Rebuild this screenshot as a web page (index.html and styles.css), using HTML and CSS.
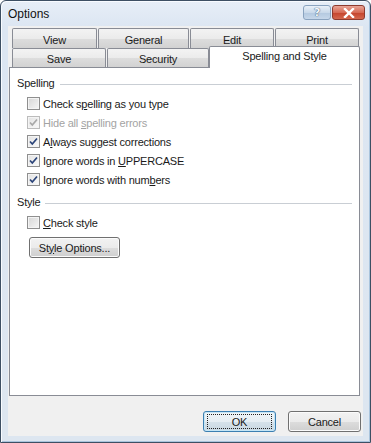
FILE: index.html
```html
<!DOCTYPE html>
<html>
<head>
<meta charset="utf-8">
<link rel="stylesheet" href="styles.css">
</head>
<body>
<div class="window">
  <div class="titlebar">
    <span class="title">Options</span>
    <div class="caption-btns">
      <div class="cbtn help"><span class="qmark">?</span></div>
      <div class="cbtn close">
        <svg width="14" height="10" viewBox="0 0 14 10"><path d="M3 1 L11 9 M11 1 L3 9" stroke="#ffffff" stroke-width="2.4" stroke-linecap="square" fill="none"/></svg>
      </div>
    </div>
  </div>
  <div class="client">
    <div class="tabs">
      <div class="tabrow row1">
        <div class="tab t-view">View</div>
        <div class="tab t-general">General</div>
        <div class="tab t-edit">Edit</div>
        <div class="tab t-print">Print</div>
      </div>
      <div class="tabrow row2">
        <div class="tab t-save">Save</div>
        <div class="tab t-security">Security</div>
        <div class="tab selected t-spelling">Spelling and Style</div>
      </div>
    </div>
    <div class="panel">
      <div class="group-head first"><span>Spelling</span><i class="rule"></i></div>
      <div class="opts">
        <div class="opt"><span class="cb"></span><span>Check s<u>p</u>elling as you type</span></div>
        <div class="opt disabled"><span class="cb checked"><svg width="11" height="11" viewBox="0 0 11 11"><path d="M2 5.5 L4.3 8 L9 2.5" stroke="#a8a8a8" stroke-width="1.7" fill="none"/></svg></span><span>Hide all <u>s</u>pelling errors</span></div>
        <div class="opt"><span class="cb checked"><svg width="11" height="11" viewBox="0 0 11 11"><path d="M2 5.5 L4.3 8 L9 2.5" stroke="#2b4479" stroke-width="1.7" fill="none"/></svg></span><span>A<u>l</u>ways suggest corrections</span></div>
        <div class="opt"><span class="cb checked"><svg width="11" height="11" viewBox="0 0 11 11"><path d="M2 5.5 L4.3 8 L9 2.5" stroke="#2b4479" stroke-width="1.7" fill="none"/></svg></span><span>Ignore words in <u>U</u>PPERCASE</span></div>
        <div class="opt"><span class="cb checked"><svg width="11" height="11" viewBox="0 0 11 11"><path d="M2 5.5 L4.3 8 L9 2.5" stroke="#2b4479" stroke-width="1.7" fill="none"/></svg></span><span>Ignore words with num<u>b</u>ers</span></div>
      </div>
      <div class="group-head second"><span>Style</span><i class="rule"></i></div>
      <div class="opts">
        <div class="opt"><span class="cb"></span><span><u>C</u>heck style</span></div>
      </div>
      <div class="btn style-btn">St<u>y</u>le Options...</div>
    </div>
    <div class="footer">
      <div class="btn default"><span class="focus">OK</span></div>
      <div class="btn">Cancel</div>
    </div>
  </div>
</div>
</body>
</html>
```

FILE: styles.css
```css
html, body {
  margin: 0;
  padding: 0;
}
body {
  width: 371px;
  height: 443px;
  font-family: "Liberation Sans", Arial, sans-serif;
  font-size: 11px;
  letter-spacing: -0.2px;
  color: #1a1a1a;
  overflow: hidden;
}
u { text-decoration: underline; text-underline-offset: 1px; }

.window {
  width: 371px;
  height: 443px;
  box-sizing: border-box;
  border: 1px solid #3d4f63;
  border-radius: 6px 6px 0 0;
  background: linear-gradient(#e7eef7, #dce6f2 26px, #dde6f0);
  display: flex;
  flex-direction: column;
  box-shadow: inset 1px 1px 0 #f8fbff, inset -1px -1px 0 #a9c4dd;
}

.titlebar {
  height: 25px;
  display: flex;
  align-items: center;
  justify-content: space-between;
  padding: 0 5px 0 7px;
}
.title {
  font-size: 12px;
  letter-spacing: 0;
  color: #111;
}
.caption-btns {
  display: flex;
  gap: 1px;
  align-self: flex-start;
  margin-top: 4px;
}
.cbtn {
  height: 15px;
  border-radius: 3px;
  display: flex;
  align-items: center;
  justify-content: center;
  box-sizing: border-box;
}
.help {
  width: 28px;
  border: 1px solid #8aa3bf;
  background: linear-gradient(#e9f0f8, #c9d9ea 50%, #b3c8df 51%, #c6d7ea);
}
.qmark {
  font-family: "DejaVu Sans", sans-serif;
  font-weight: bold;
  font-size: 11px;
  color: #f4f8fc;
  text-shadow: 0 0 1px #3e5a7a, 0 0 1px #3e5a7a;
  line-height: 13px;
}
.close {
  width: 33px;
  border: 1px solid #8d3a2e;
  background: linear-gradient(#e9a597, #d66a55 50%, #c4432c 51%, #d4674e);
}

.client {
  flex: 1;
  margin: 0 7px 6px 7px;
  background: #f0f0f0;
  display: flex;
  flex-direction: column;
}

.tabs {
  padding: 2px 0 0 4px;
}
.tabrow {
  display: flex;
}
.tab {
  box-sizing: border-box;
  border: 1px solid #898c95;
  border-bottom: none;
  border-radius: 2px 2px 0 0;
  background: linear-gradient(#f3f3f3, #ebebeb 50%, #dddddd 51%, #d2d2d2);
  text-align: center;
  margin-right: 1px;
}
.row1 .tab {
  height: 20px;
  line-height: 20px;
  padding-top: 1px;
}
.row2 .tab {
  height: 19px;
  line-height: 19px;
  padding-top: 1px;
}
.t-view { width: 85px; }
.t-general { width: 91px; }
.t-edit { width: 84px; }
.t-print { width: 84px; margin-right: 0; }
.t-save { width: 94px; }
.t-security { width: 102px; margin-right: 0; }
.row2 .tab.selected {
  width: 151px;
  height: 22px;
  line-height: 18px;
  padding-top: 0;
  margin-top: -2px;
  margin-bottom: -1px;
  margin-right: 0;
  background: #ffffff;
  position: relative;
  z-index: 1;
}

.panel {
  margin-left: 1px;
  width: 351px;
  height: 329px;
  box-sizing: border-box;
  border: 1px solid #898c95;
  background: #ffffff;
  padding: 0 7px 0 7px;
  display: flex;
  flex-direction: column;
  align-items: stretch;
}
.group-head {
  height: 13px;
  line-height: 13px;
  display: flex;
  align-items: center;
  gap: 5px;
}
.group-head.first { margin-top: 9px; }
.group-head.second { margin-top: 7px; }
.rule {
  flex: 1;
  height: 1px;
  background: #c9ced4;
  margin-top: 1px;
}
.opts {
  margin-top: 4px;
  padding-left: 10px;
}
.opt {
  height: 19px;
  display: flex;
  align-items: center;
  gap: 3px;
}
.opt.disabled { color: #a3a3a3; }
.cb {
  width: 13px;
  height: 13px;
  box-sizing: border-box;
  border: 1px solid #8f8f8f;
  background: linear-gradient(135deg, #d6d6d6, #f6f6f6);
  box-shadow: inset 0 0 0 1px #f4f4f4;
  display: flex;
  align-items: center;
  justify-content: center;
  flex: none;
}
.cb.checked {
  background: linear-gradient(135deg, #e2e2e2, #fafafa);
}
.opt.disabled .cb { border-color: #bcbcbc; }

.btn {
  box-sizing: border-box;
  height: 21px;
  border: 1px solid #707070;
  border-radius: 3px;
  background: linear-gradient(#f2f2f2, #ebebeb 50%, #dddddd 51%, #cfcfcf);
  box-shadow: inset 0 0 0 1px #fbfbfb;
  display: flex;
  align-items: center;
  justify-content: center;
}
.style-btn {
  width: 91px;
  margin-top: 5px;
  margin-left: 12px;
}
.footer {
  margin-top: 15px;
  display: flex;
  justify-content: flex-end;
  gap: 12px;
  padding-right: 2px;
}
.footer .btn { width: 73px; }
.btn.default {
  border-color: #3c7fb1;
  box-shadow: inset 0 0 0 1px #c6e6f6;
  background: linear-gradient(#f0f5f8, #e6eef3 50%, #d6e2ea 51%, #c9d8e2);
}
.focus {
  box-sizing: border-box;
  width: 65px;
  height: 15px;
  border: 1px dotted #222;
  display: flex;
  align-items: center;
  justify-content: center;
}
```
